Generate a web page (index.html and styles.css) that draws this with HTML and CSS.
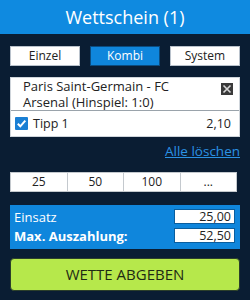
FILE: index.html
```html
<!DOCTYPE html>
<html lang="de">
<head>
<meta charset="utf-8">
<link rel="stylesheet" href="styles.css">
</head>
<body>
<div class="slip">
  <header class="head">Wettschein (1)</header>
  <div class="content">
    <div class="tabs">
      <div class="tab">Einzel</div>
      <div class="tab active">Kombi</div>
      <div class="tab">System</div>
    </div>
    <div class="card">
      <div class="match">
        <div class="match-name">Paris Saint-Germain - FC Arsenal (Hinspiel: 1:0)</div>
        <span class="close">
          <svg width="12" height="12" viewBox="0 0 12 12"><rect width="12" height="12" fill="#3a3a3a"/><path d="M2.5 2.5 L9.5 9.5 M9.5 2.5 L2.5 9.5" stroke="#d8d8d8" stroke-width="1.6"/></svg>
        </span>
      </div>
      <div class="tip">
        <span class="check">
          <svg width="13" height="13" viewBox="0 0 13 13"><rect width="13" height="13" rx="1" fill="#1a7fd4"/><path d="M2.8 6.8 L5.3 9.3 L10.3 3.6" stroke="#fff" stroke-width="2" fill="none"/></svg>
        </span>
        <span class="tip-name">Tipp 1</span>
        <span class="odd">2,10</span>
      </div>
    </div>
    <div class="clear-row"><a class="clear" href="#">Alle löschen</a></div>
    <div class="amounts">
      <div class="amt">25</div>
      <div class="amt">50</div>
      <div class="amt">100</div>
      <div class="amt">...</div>
    </div>
    <div class="stake">
      <div class="stake-row">
        <span class="label">Einsatz</span>
        <span class="field">25,00</span>
      </div>
      <div class="stake-row">
        <span class="label bold">Max. Auszahlung:</span>
        <span class="field">52,50</span>
      </div>
    </div>
    <div class="submit">WETTE ABGEBEN</div>
  </div>
</div>
</body>
</html>
```
FILE: styles.css
```css
html, body {
  margin: 0;
  padding: 0;
}
body {
  width: 250px;
  height: 300px;
  background: #0a1d33;
  font-family: "Open Sans", "DejaVu Sans", sans-serif;
  overflow: hidden;
}
.head {
  height: 34px;
  background: #0f8ae0;
  color: #fff;
  font-size: 18px;
  line-height: 34px;
  text-align: center;
}
.content {
  padding: 0 10px;
}
.tabs {
  display: flex;
  gap: 10px;
  margin-top: 12px;
}
.tab {
  flex: 1;
  height: 20px;
  box-sizing: border-box;
  background: #fff;
  border: 1px solid #b9c2cc;
  color: #222;
  font-size: 12px;
  line-height: 18px;
  text-align: center;
}
.tab.active {
  background: #0f86dc;
  border-color: #0b4c80;
  color: #fff;
}
.card {
  margin-top: 11px;
  background: #fff;
  border: 1px solid #cfd5db;
  box-sizing: border-box;
  height: 60px;
}
.match {
  display: flex;
  align-items: flex-start;
  height: 33px;
  border-bottom: 1px solid #9aa3ab;
  padding: 0 6px 0 12px;
  box-sizing: border-box;
}
.match-name {
  flex: 1;
  font-size: 13px;
  line-height: 16px;
  color: #222;
  padding-right: 14px;
}
.close {
  margin-top: 5px;
  display: flex;
}
.tip {
  display: flex;
  align-items: center;
  height: 25px;
  padding: 0 8px 0 4px;
  font-size: 12.5px;
  color: #222;
}
.check {
  display: flex;
  margin-right: 5px;
}
.tip-name {
  flex: 1;
}
.clear-row {
  display: flex;
  justify-content: flex-end;
  margin-top: 6px;
  height: 16px;
}
.clear {
  color: #2b92e4;
  font-size: 13.5px;
  line-height: 16px;
  text-decoration: underline;
}
.amounts {
  display: flex;
  margin-top: 13px;
  width: 227px;
  height: 20px;
  background: #fff;
}
.amt {
  flex: 1;
  border: 1px solid #c4c9ce;
  border-left-width: 0;
  box-sizing: border-box;
  font-size: 12px;
  line-height: 18px;
  text-align: center;
  color: #222;
}
.amt:first-child {
  border-left-width: 1px;
}
.stake {
  margin-top: 13px;
  background: #0f86dc;
  height: 44px;
  box-sizing: border-box;
  padding: 4px 5px 0 4px;
  display: flex;
  flex-direction: column;
  gap: 4px;
}
.stake-row {
  display: flex;
  align-items: center;
  justify-content: space-between;
  height: 15px;
}
.label {
  color: #fff;
  font-size: 13px;
}
.label.bold {
  font-weight: 700;
}
.field {
  width: 61px;
  height: 15px;
  background: #fff;
  box-sizing: border-box;
  border: 1px solid #0a5e9e;
  font-size: 12.5px;
  line-height: 13px;
  text-align: right;
  padding-right: 3px;
  color: #222;
}
.submit {
  margin-top: 9px;
  height: 33px;
  background: #b6e84b;
  border: 1px solid #2b3f2a;
  box-sizing: border-box;
  border-radius: 4px;
  text-align: center;
  line-height: 31px;
  font-size: 15px;
  color: #1e2a14;
}
```
